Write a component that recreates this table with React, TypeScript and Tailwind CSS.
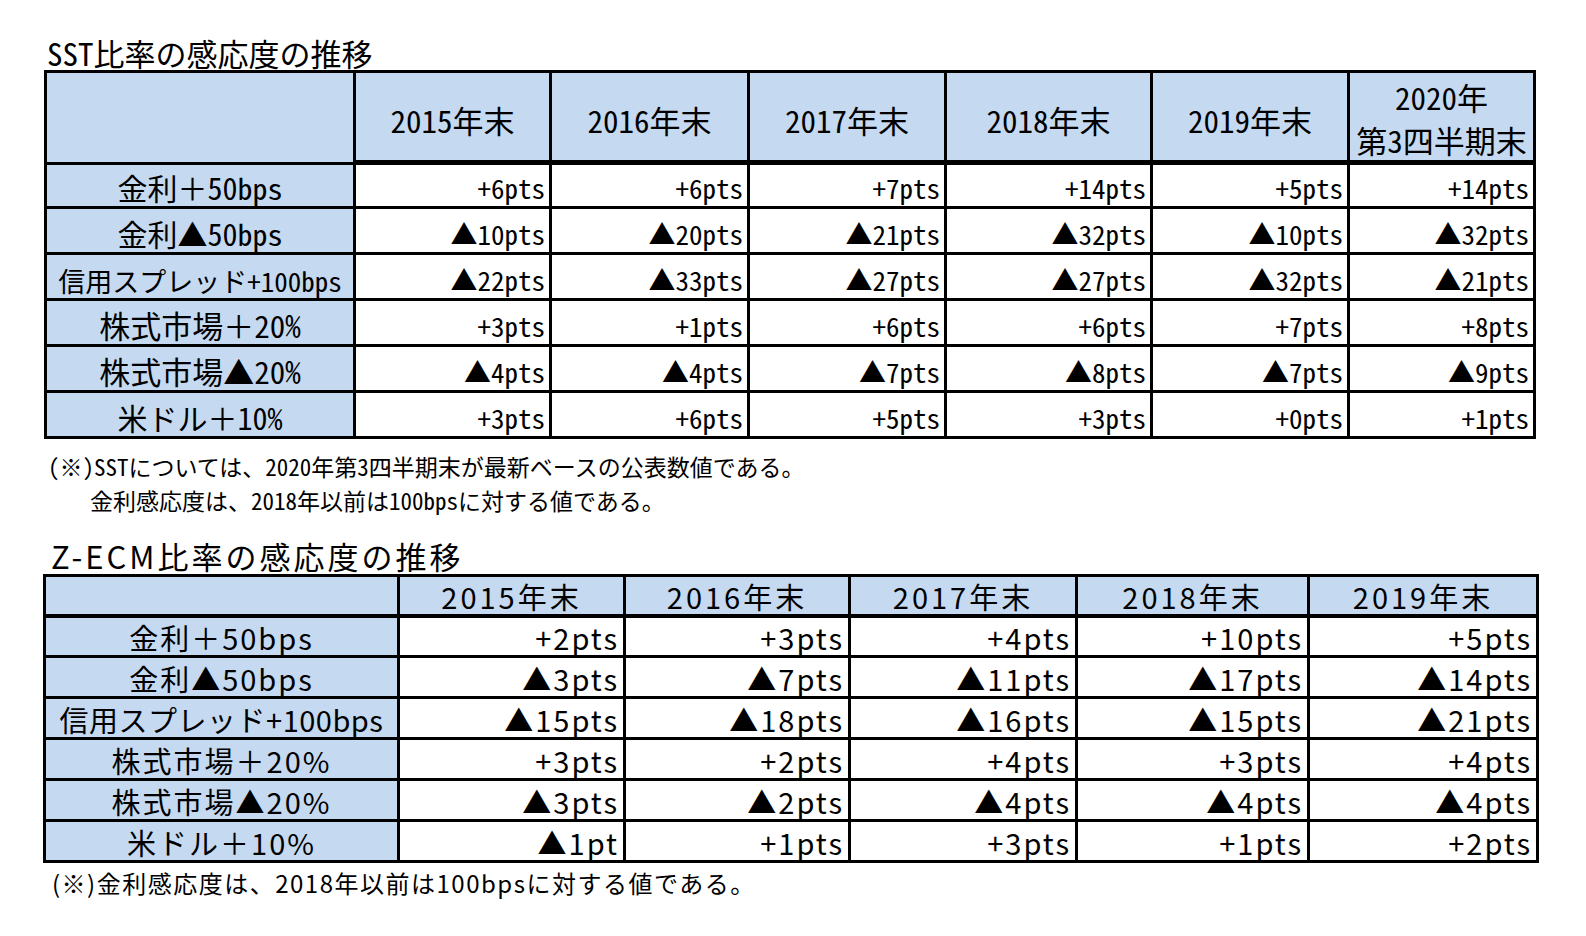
import React from "react";

const sstCols = ["2015年末", "2016年末", "2017年末", "2018年末", "2019年末"];

const sstRows = [
  { label: "金利＋50bps", size: "text-[30px]", vals: ["+6pts", "+6pts", "+7pts", "+14pts", "+5pts", "+14pts"] },
  { label: "金利▲50bps", size: "text-[30px]", vals: ["▲10pts", "▲20pts", "▲21pts", "▲32pts", "▲10pts", "▲32pts"] },
  { label: "信用スプレッド+100bps", size: "text-[27px]", vals: ["▲22pts", "▲33pts", "▲27pts", "▲27pts", "▲32pts", "▲21pts"] },
  { label: "株式市場＋20%", size: "text-[31px]", vals: ["+3pts", "+1pts", "+6pts", "+6pts", "+7pts", "+8pts"] },
  { label: "株式市場▲20%", size: "text-[31px]", vals: ["▲4pts", "▲4pts", "▲7pts", "▲8pts", "▲7pts", "▲9pts"] },
  { label: "米ドル＋10%", size: "text-[30px]", vals: ["+3pts", "+6pts", "+5pts", "+3pts", "+0pts", "+1pts"] },
];

const ecmRows = [
  { label: "金利＋50bps", track: "tracking-[2px]", vals: ["+2pts", "+3pts", "+4pts", "+10pts", "+5pts"] },
  { label: "金利▲50bps", track: "tracking-[2px]", vals: ["▲3pts", "▲7pts", "▲11pts", "▲17pts", "▲14pts"] },
  { label: "信用スプレッド+100bps", track: "tracking-[0.5px]", vals: ["▲15pts", "▲18pts", "▲16pts", "▲15pts", "▲21pts"] },
  { label: "株式市場＋20%", track: "tracking-[2px]", vals: ["+3pts", "+2pts", "+4pts", "+3pts", "+4pts"] },
  { label: "株式市場▲20%", track: "tracking-[2px]", vals: ["▲3pts", "▲2pts", "▲4pts", "▲4pts", "▲4pts"] },
  { label: "米ドル＋10%", track: "tracking-[2px]", vals: ["▲1pt", "+1pts", "+3pts", "+1pts", "+2pts"] },
];

// narrow half-width latin, like the gothic font in the sheet
const narrow = "font-['Noto_Sans_CJK_JP',sans-serif] [font-feature-settings:'hwid']";
const wide = "font-['Noto_Sans_CJK_JP',sans-serif]";

// keep the full-width plus sign wide inside hwid text
const Label = ({ text }: { text: string }) => (
  <span>
    {text.split(/(＋)/).map((part, i) =>
      part === "＋" ? (
        <span key={i} className="[font-feature-settings:normal]">
          ＋
        </span>
      ) : (
        <React.Fragment key={i}>{part}</React.Fragment>
      )
    )}
  </span>
);

const SstTable = () => {
  return (
    <div className="grid w-[1492px] grid-cols-[306px_193px_195px_194px_203px_194px_183px] grid-rows-[87px_43px_43px_43px_43px_43px_43px] gap-[3px] bg-black p-[3px]">
      <div className="bg-[#c5d9f1] -mb-[2px]" />
      {sstCols.map((c) => (
        <div key={c} className="flex items-center justify-center bg-[#c5d9f1] pt-[6px] text-[31px] leading-none text-black">
          {c}
        </div>
      ))}
      <div className="flex flex-col items-center justify-center bg-[#c5d9f1] pt-[3px] text-[31px] leading-[43px] text-black">
        <span>2020年</span>
        <span>第3四半期末</span>
      </div>
      {sstRows.map((r, i) => (
        <React.Fragment key={r.label}>
          <div className={`flex items-end justify-center bg-[#c5d9f1] pb-[4px] leading-none text-black ${r.size} ${i === 0 ? "mt-[2px]" : ""}`}>
            <Label text={r.label} />
          </div>
          {r.vals.map((v, j) => (
            <div
              key={j}
              className={`flex items-end justify-end bg-white pr-[4px] pb-[5px] text-[27px] leading-none text-black ${i === 0 ? "mt-[2px]" : ""}`}
            >
              {v}
            </div>
          ))}
        </React.Fragment>
      ))}
    </div>
  );
};

const EcmTable = () => {
  return (
    <div className="grid w-[1496px] grid-cols-[351px_223px_222px_224px_229px_226px] grid-rows-[37px_38px_38px_38px_38px_38px_38px] gap-[3px] bg-black p-[3px]">
      <div className="bg-[#c5d9f1]" />
      {sstCols.map((c) => (
        <div key={c} className="flex items-end justify-center bg-[#c5d9f1] pb-[3px] text-[29px] leading-none tracking-[3px] text-black">
          {c}
        </div>
      ))}
      {ecmRows.map((r, i) => (
        <React.Fragment key={r.label}>
          <div className={`flex items-end justify-center bg-[#c5d9f1] pb-[3px] text-[29px] leading-none text-black ${r.track} ${i === 0 ? "mt-[1px]" : ""}`}>
            {r.label}
          </div>
          {r.vals.map((v, j) => (
            <div
              key={j}
              className={`flex items-end justify-end bg-white pr-[4px] pb-[3px] text-[29px] leading-none tracking-[2px] text-black ${i === 0 ? "mt-[1px]" : ""}`}
            >
              {v}
            </div>
          ))}
        </React.Fragment>
      ))}
    </div>
  );
};

export default function App() {
  return (
    <div className="min-h-[936px] w-[1586px] bg-white pl-[44px] text-black">
      <div className={`${narrow} pt-[35px]`}>
        <h2 className="pl-[3px] text-[31px] leading-[35px]">SST比率の感応度の推移</h2>
        <SstTable />
        <div className="mt-[10px] pl-[4px] text-[23px] leading-[34px]">
          <p>(※)SSTについては、2020年第3四半期末が最新ベースの公表数値である。</p>
          <p className="pl-[42px]">金利感応度は、2018年以前は100bpsに対する値である。</p>
        </div>
      </div>
      <div className={`${wide} mt-[21px]`}>
        <h2 className="pl-[7px] text-[31px] leading-[36px] tracking-[3px]">Z-ECM比率の感応度の推移</h2>
        <div className="-ml-[1px]">
          <EcmTable />
        </div>
        <p className="mt-[5px] pl-[8px] text-[24px] leading-[30px] tracking-[1.5px]">(※)金利感応度は、2018年以前は100bpsに対する値である。</p>
      </div>
    </div>
  );
}
